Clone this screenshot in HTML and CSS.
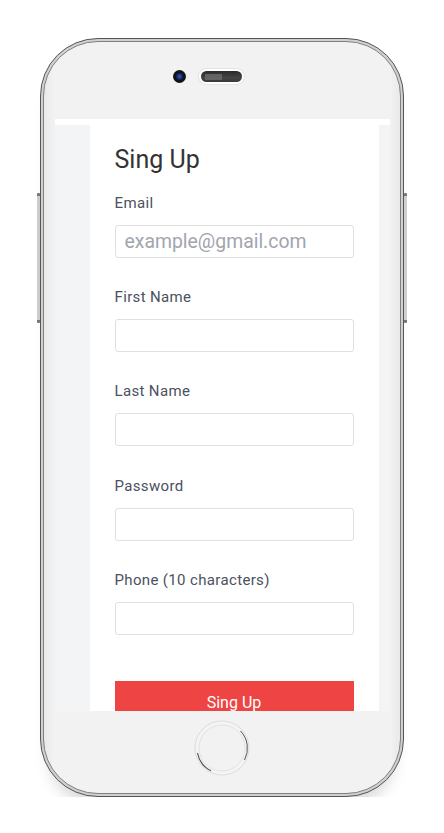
FILE: index.html
```html
<!DOCTYPE html>
<html lang="en">
<head>
<meta charset="utf-8">
<title>Sing Up</title>
<link rel="stylesheet" href="styles.css">
</head>
<body>
<div class="stage">
  <div class="side-btn"></div>
  <div class="phone">
    <div class="phone-inner">
      <div class="top-bar">
        <div class="camera"></div>
        <div class="speaker"><span class="mesh"></span></div>
      </div>
      <div class="screen">
        <div class="screen-body">
          <form class="card">
            <h1 class="title">Sing Up</h1>
            <div class="field">
              <label class="label">Email</label>
              <input class="input" type="text" placeholder="example@gmail.com">
            </div>
            <div class="field">
              <label class="label">First Name</label>
              <input class="input" type="text">
            </div>
            <div class="field">
              <label class="label">Last Name</label>
              <input class="input" type="text">
            </div>
            <div class="field">
              <label class="label">Password</label>
              <input class="input" type="password">
            </div>
            <div class="field">
              <label class="label">Phone (10 characters)</label>
              <input class="input" type="text">
            </div>
            <button class="submit" type="button">Sing Up</button>
          </form>
        </div>
      </div>
      <div class="bottom-bar">
        <svg class="home" width="56" height="56" viewBox="0 0 56 56">
          <circle cx="28" cy="28" r="27" fill="#f4f4f4" stroke="#dcdcdc" stroke-width="1"/>
          <path d="M3.5 33 A25 25 0 0 0 17 50.8" fill="none" stroke="#4a4a4a" stroke-width="1.1"/>
          <path d="M46.5 11 A25 25 0 0 1 50.5 40" fill="none" stroke="#555" stroke-width="1"/>
          <circle cx="28" cy="28" r="23" fill="#f2f2f2" stroke="#e2e2e2" stroke-width="1"/>
        </svg>
      </div>
    </div>
  </div>
  <div class="side-btn"></div>
</div>
</body>
</html>
```

FILE: styles.css
```css
* { box-sizing: border-box; }

html, body {
  margin: 0;
  padding: 0;
  background: #ffffff;
}

body {
  font-family: Roboto, "Liberation Sans", Arial, sans-serif;
}

.stage {
  display: flex;
  align-items: flex-start;
  padding: 38px 0 0 37px;
}

.side-btn {
  width: 3px;
  height: 130px;
  margin-top: 155px;
  background: linear-gradient(to bottom, #777 0, #777 3px, #cfcfcf 3px, #cfcfcf calc(100% - 3px), #777 calc(100% - 3px));
  border-radius: 1px;
}

.phone {
  width: 364px;
  height: 759px;
  border-radius: 58px;
  border: 1.5px solid #555555;
  background: #d0d0d0;
  padding: 2px;
  box-shadow: 0 18px 16px -10px rgba(0, 0, 0, 0.16);
}

.phone-inner {
  height: 100%;
  border-radius: 55px;
  border: 1.5px solid #808080;
  background: linear-gradient(to right, #e9e9e9 0, #f2f2f2 10px, #f2f2f2 calc(100% - 10px), #e9e9e9 100%);
  display: flex;
  flex-direction: column;
  align-items: center;
}

.top-bar {
  height: 77px;
  width: 100%;
  padding: 28px 30px 0 0;
  display: flex;
  justify-content: center;
  align-items: flex-start;
  gap: 15px;
}

.camera {
  width: 13px;
  height: 13px;
  border-radius: 50%;
  background: radial-gradient(circle at 50% 50%, #2a5bd0 0, #1a3a8a 2px, #111 4px, #1b1b1b 100%);
}

.speaker {
  width: 41px;
  height: 11px;
  margin-top: 1px;
  border-radius: 6px;
  background: linear-gradient(to bottom, #2b2b2b, #444 60%, #3a3a3a);
  box-shadow: 0 0 0 2px #ffffff, 0 0 0 3px #e4e4e4;
  display: flex;
  align-items: center;
  padding-left: 4px;
}

.mesh {
  width: 17px;
  height: 6px;
  background-image: radial-gradient(circle, #777 0.6px, transparent 0.9px);
  background-size: 2px 2px;
}

.screen {
  width: 335px;
  height: 592px;
  background: #ffffff;
  padding-top: 6px;
  overflow: hidden;
}

.screen-body {
  height: 100%;
  background: #f3f4f6;
  display: flex;
  padding: 0 11px 0 35px;
}

.card {
  flex: 1;
  margin: 0;
  background: #ffffff;
  padding: 19.5px 25px 0 25px;
  overflow: hidden;
}

.title {
  margin: 0 0 18.2px 0;
  font-size: 25px;
  line-height: 30px;
  font-weight: 400;
  color: #333333;
}

.field {
  display: flex;
  flex-direction: column;
  margin-bottom: 29.3px;
}

.label {
  font-size: 15px;
  line-height: 20px;
  letter-spacing: 0.35px;
  color: #4b5160;
  margin-bottom: 12px;
}

.input {
  width: 239px;
  height: 33px;
  border: 1px solid #e0e0e0;
  border-radius: 3px;
  padding: 0 9px;
  background: #ffffff;
  font-family: Roboto, "Liberation Sans", Arial, sans-serif;
  font-size: 19.4px;
  color: #333;
  outline: none;
}

.input::placeholder {
  color: #a1a5ae;
}

.submit {
  display: block;
  width: 239px;
  margin-top: 46px;
  border: none;
  border-radius: 0;
  background: #ef4444;
  color: #ffffff;
  font-family: Roboto, "Liberation Sans", Arial, sans-serif;
  font-size: 16px;
  line-height: 24px;
  padding: 10px 0 6px 0;
  cursor: pointer;
}

.bottom-bar {
  height: 80px;
  width: 100%;
  display: flex;
  justify-content: center;
  padding-top: 9px;
}

.home {
  display: block;
}
```
